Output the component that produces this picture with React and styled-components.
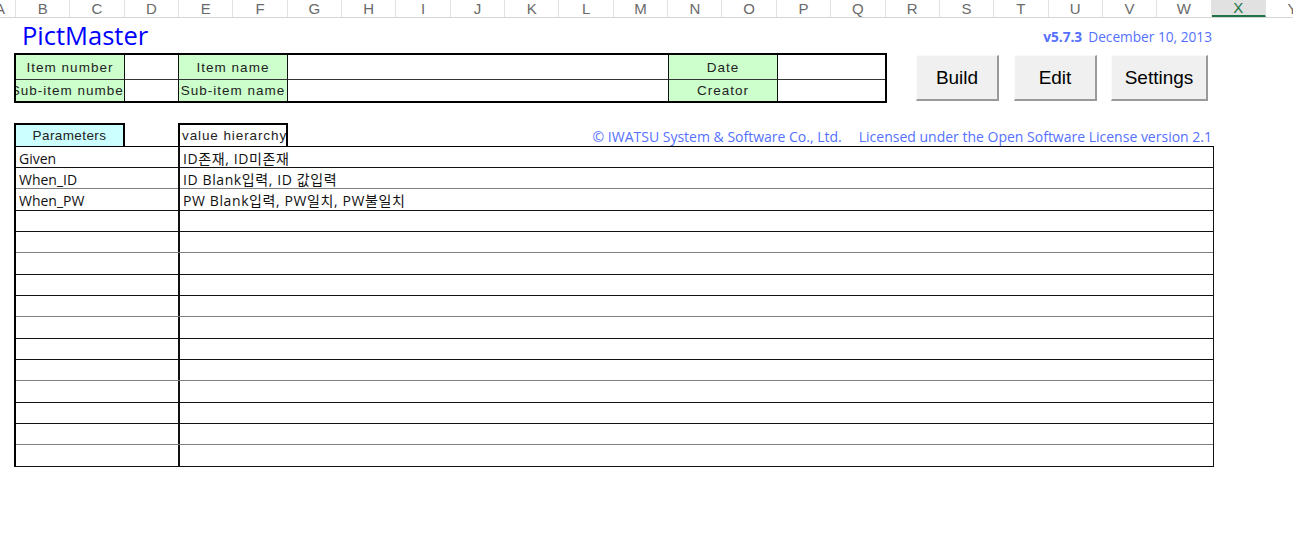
import styled, { createGlobalStyle } from "styled-components";

const GlobalStyle = createGlobalStyle`
  *, *::before, *::after { box-sizing: border-box; }
  html, body { margin: 0; background: #fff; }
  body { font-family: "Liberation Sans", Arial, sans-serif; color: #000; }
`;

const letters = "BCDEFGHIJKLMNOPQRSTUVWXY".split("");

const rows = [
  { name: "Given", values: "ID존재, ID미존재" },
  { name: "When_ID", values: "ID Blank입력, ID 값입력" },
  { name: "When_PW", values: "PW Blank입력, PW일치, PW불일치" },
];
while (rows.length < 15) rows.push({ name: "", values: "" });

const ColumnBar = styled.div`
  display: flex;
  height: 18px;
  border-bottom: 1px solid #d4d4d4;
  overflow: hidden;
`;

const ColCell = styled.div`
  flex: 0 0 ${(p) => p.$w}px;
  display: flex;
  align-items: center;
  justify-content: ${(p) => (p.$clip ? "flex-end" : "center")};
  overflow: hidden;
  border-right: 1px solid #e2e2e2;
  font-size: 15px;
  color: ${(p) => (p.$active ? "#217346" : "#6a6a6a")};
  background: ${(p) => (p.$active ? "#e1e1e1" : "#fff")};
  border-bottom: ${(p) => (p.$active ? "2px solid #217346" : "none")};
  span {
    margin-right: ${(p) => (p.$clip ? "10px" : "0")};
  }
`;

const Sheet = styled.div`
  width: 1214px;
  padding-left: 14px;
`;

const TitleRow = styled.div`
  display: flex;
  align-items: center;
  height: 35px;
`;

const Title = styled.h1`
  margin: 0 0 0 8px;
  font-family: "Open Sans", sans-serif;
  font-weight: 400;
  font-size: 25.5px;
  color: #0000ff;
  line-height: 1;
`;

const Version = styled.div`
  margin-left: auto;
  margin-right: 2px;
  margin-top: 2px;
  font-family: "Open Sans", sans-serif;
  font-size: 13.7px;
  color: #5570ff;
  b { font-weight: 700; margin-right: 6px; }
`;

const TopRow = styled.div`
  display: flex;
  align-items: flex-start;
`;

const InfoGrid = styled.div`
  display: grid;
  grid-template-columns: 109px 54px 109px 381px 109px 107px;
  grid-template-rows: 25px 21px;
  width: 873px;
  border: 2px solid #000;
`;

const InfoCell = styled.div`
  display: flex;
  align-items: center;
  justify-content: center;
  overflow: hidden;
  white-space: nowrap;
  font-size: 13.5px;
  letter-spacing: 1px;
  color: #222;
  background: ${(p) => (p.$label ? "#ccffcc" : "#fff")};
  border-right: ${(p) => (p.$last ? "none" : "1px solid #111")};
  border-bottom: ${(p) => (p.$top ? "1px solid #333" : "none")};
`;

const ButtonGroup = styled.div`
  display: flex;
  margin-left: 29px;
  margin-top: 2px;
`;

const SheetButton = styled.button`
  width: ${(p) => p.$w}px;
  height: 46px;
  margin-right: ${(p) => p.$gap}px;
  background: #f0f0f0;
  border: none;
  border-right: 2px solid #9a9a9a;
  border-bottom: 2px solid #9a9a9a;
  border-top: 1px solid #fafafa;
  border-left: 1px solid #fafafa;
  font-family: "Liberation Sans", Arial, sans-serif;
  font-size: 19px;
  color: #000;
  padding: 0;
`;

const HeadRow = styled.div`
  display: flex;
  align-items: flex-end;
  height: 23px;
  margin-top: 20px;
`;

const HeadCell = styled.div`
  width: ${(p) => p.$w}px;
  height: 23px;
  margin-right: ${(p) => p.$gap || 0}px;
  display: flex;
  align-items: center;
  justify-content: ${(p) => (p.$center ? "center" : "flex-start")};
  padding-left: ${(p) => (p.$center ? 0 : 2)}px;
  border: 2px solid #000;
  border-bottom: none;
  background: ${(p) => p.$bg};
  font-size: 13.5px;
  letter-spacing: ${(p) => (p.$center ? 0.4 : 0.9)}px;
  color: #222;
  white-space: nowrap;
  overflow: hidden;
`;

const Notice = styled.div`
  margin-left: auto;
  margin-right: 2px;
  align-self: center;
  margin-top: 4px;
  font-family: "Open Sans", sans-serif;
  font-size: 14px;
  color: #5570ff;
  white-space: nowrap;
  span + span { margin-left: 17px; }
`;

const ParamTable = styled.div`
  width: 1200px;
  border-top: 1px solid #000;
  border-left: 2px solid #000;
  border-right: 1px solid #111;
`;

const ParamRow = styled.div`
  display: grid;
  grid-template-columns: 164px 1fr;
  height: ${(p) => p.$h}px;
  border-bottom: 1px solid ${(p) => p.$line};
`;

const ParamCell = styled.div`
  display: flex;
  align-items: center;
  padding-left: 3px;
  padding-top: 1px;
  border-right: ${(p) => (p.$first ? "2px solid #111" : "none")};
  font-family: "Open Sans", "Noto Sans CJK KR", sans-serif;
  font-size: 14px;
  letter-spacing: ${(p) => (p.$first ? 0 : 0.6)}px;
  color: #111;
  white-space: nowrap;
`;

const App = () => {
  return (
    <>
      <GlobalStyle />
      <ColumnBar>
        <ColCell $w={16} $clip>
          <span>A</span>
        </ColCell>
        {letters.map((l) => (
          <ColCell key={l} $w={54.35} $active={l === "X"}>
            {l}
          </ColCell>
        ))}
      </ColumnBar>
      <Sheet>
        <TitleRow>
          <Title>PictMaster</Title>
          <Version>
            <b>v5.7.3</b>December 10, 2013
          </Version>
        </TitleRow>
        <TopRow>
          <InfoGrid>
            <InfoCell $label $top>Item number</InfoCell>
            <InfoCell $top />
            <InfoCell $label $top>Item name</InfoCell>
            <InfoCell $top />
            <InfoCell $label $top>Date</InfoCell>
            <InfoCell $top $last />
            <InfoCell $label>Sub-item number</InfoCell>
            <InfoCell />
            <InfoCell $label>Sub-item name</InfoCell>
            <InfoCell />
            <InfoCell $label>Creator</InfoCell>
            <InfoCell $last />
          </InfoGrid>
          <ButtonGroup>
            <SheetButton $w={83} $gap={15}>Build</SheetButton>
            <SheetButton $w={83} $gap={14}>Edit</SheetButton>
            <SheetButton $w={97} $gap={0}>Settings</SheetButton>
          </ButtonGroup>
        </TopRow>
        <HeadRow>
          <HeadCell $w={111} $gap={53} $bg="#ccffff" $center>
            Parameters
          </HeadCell>
          <HeadCell $w={110} $bg="#fff">
            value hierarchy
          </HeadCell>
          <Notice>
            <span>© IWATSU System &amp; Software Co., Ltd.</span>
            <span>Licensed under the Open Software License version 2.1</span>
          </Notice>
        </HeadRow>
        <ParamTable>
          {rows.map((r, i) => (
            <ParamRow
              key={i}
              $h={i % 3 === 2 ? 22 : 21}
              $line={i % 3 === 1 ? "#808080" : "#111"}
            >
              <ParamCell $first>{r.name}</ParamCell>
              <ParamCell>{r.values}</ParamCell>
            </ParamRow>
          ))}
        </ParamTable>
      </Sheet>
    </>
  );
};

export default App;
